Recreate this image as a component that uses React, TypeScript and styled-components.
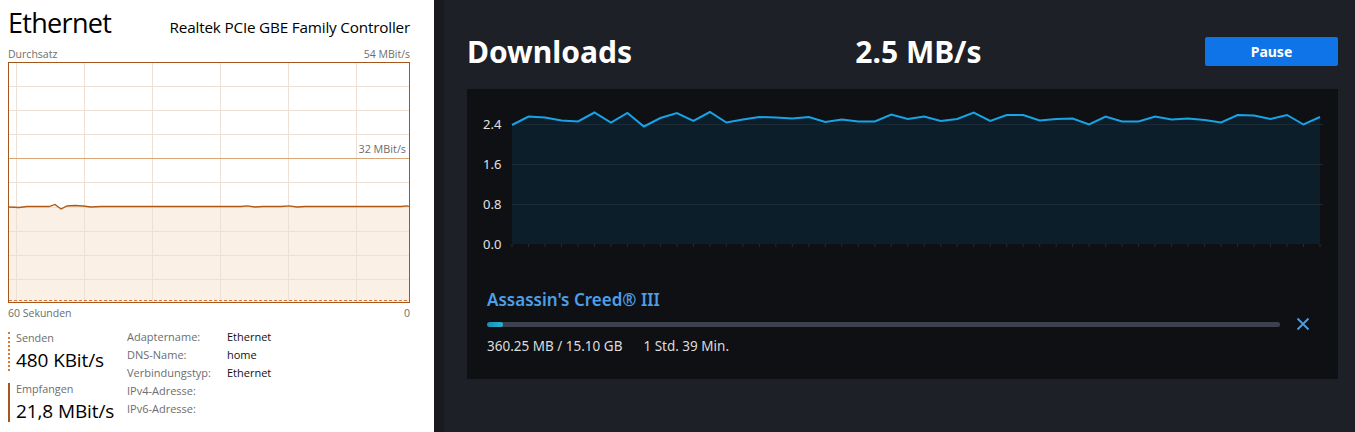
import React from "react";
import styled, { createGlobalStyle } from "styled-components";

const GlobalStyle = createGlobalStyle`
  html, body, #root { margin: 0; padding: 0; height: 100%; }
  body { background: #1d2027; overflow: hidden; }
  * { box-sizing: border-box; }
`;

const Page = styled.div`
  display: flex;
  width: 1355px;
  height: 432px;
`;

/* ---------- Left: Windows Task Manager style ---------- */
const LeftPane = styled.section`
  width: 434px;
  flex: none;
  background: #ffffff;
  padding: 0 24px 0 8px;
  display: flex;
  flex-direction: column;
  font-family: "Open Sans", "Noto Sans", sans-serif;
  color: #000;
`;

const WinHeader = styled.header`
  display: flex;
  justify-content: space-between;
  align-items: baseline;
  height: 44px;
  padding-top: 4px;
`;

const WinTitle = styled.h1`
  margin: 0;
  font-weight: 400;
  font-size: 27px;
  line-height: 38px;
  letter-spacing: -0.7px;
`;

const WinSubtitle = styled.div`
  font-size: 15.3px;
  line-height: 20px;
  letter-spacing: -0.2px;
`;

const CaptionRow = styled.div<{ $top?: number }>`
  display: flex;
  justify-content: space-between;
  font-size: 10.5px;
  line-height: 16px;
  color: #6d6d6d;
  margin-top: ${(p) => p.$top ?? 0}px;
`;

const WinChart = styled.div`
  height: 241px;
  border: 1px solid #a4561c;
`;

const Stats = styled.div`
  display: grid;
  grid-template-columns: 119px 100px 1fr;
  margin-top: 7px;
`;

const StatCol = styled.div`
  display: flex;
  flex-direction: column;
  gap: 12px;
  padding-top: 4px;
`;

const StatBlock = styled.div<{ $dotted?: boolean }>`
  border-left: 2px ${(p) => (p.$dotted ? "dotted #e07434" : "solid #a4561c")};
  padding-left: 6px;
  height: 39px;
`;

const StatLabel = styled.div`
  font-size: 10.8px;
  line-height: 11px;
  color: #6d6d6d;
`;

const StatValue = styled.div`
  font-size: 19px;
  line-height: 22px;
  margin-top: 6px;
  letter-spacing: -0.1px;
`;

const InfoList = styled.div<{ $dark?: boolean }>`
  display: flex;
  flex-direction: column;
  font-size: 11px;
  line-height: 18px;
  color: ${(p) => (p.$dark ? "#111" : "#6d6d6d")};
`;

/* ---------- Right: Downloads panel ---------- */
const RightPane = styled.section`
  flex: 1;
  background: #1d2027;
  border-left: 10px solid #181a20;
  padding: 37px 17px 0 23px;
  font-family: "Noto Sans", "Open Sans", sans-serif;
  color: #fff;
`;

const DlHeader = styled.header`
  display: flex;
  justify-content: space-between;
  align-items: center;
  height: 29px;
`;

const DlTitle = styled.h2`
  margin: 0;
  font-size: 30px;
  font-weight: 700;
  line-height: 29px;
  letter-spacing: 0;
`;

const DlSpeed = styled.div`
  font-size: 30px;
  font-weight: 700;
  line-height: 29px;
  letter-spacing: 0;
`;

const PauseButton = styled.button`
  width: 133px;
  height: 29px;
  border: none;
  border-radius: 2px;
  background: #0e74e8;
  color: #fff;
  font-family: inherit;
  font-size: 14px;
  font-weight: 700;
  cursor: pointer;
`;

const Panel = styled.div`
  margin-top: 23px;
  height: 290px;
  background: #0f1014;
  display: flex;
  flex-direction: column;
`;

const ChartSvg = styled.svg`
  display: block;
  width: 100%;
  height: 180px;
`;

const Item = styled.div`
  padding: 20px 28px 0 20px;
`;

const ItemTitle = styled.div`
  font-size: 17px;
  font-weight: 600;
  line-height: 22px;
  color: #4c9fe6;
`;

const ProgressRow = styled.div`
  display: flex;
  align-items: center;
  gap: 16px;
  margin-top: 6px;
  height: 14px;
`;

const Track = styled.div`
  flex: 1;
  height: 5px;
  border-radius: 3px;
  background: #3b424d;
  overflow: hidden;
`;

const Fill = styled.div`
  height: 100%;
  border-radius: 3px;
  background: linear-gradient(90deg, #1a8fb6, #26b4d2);
`;

const CloseButton = styled.button`
  width: 14px;
  height: 14px;
  padding: 0;
  border: none;
  background: none;
  display: flex;
  cursor: pointer;
`;

const ItemMeta = styled.div`
  display: flex;
  gap: 21px;
  margin-top: 7px;
  font-size: 13.5px;
  line-height: 16px;
  color: #dcdcdc;
`;

const data = [
  2.38, 2.55, 2.53, 2.47, 2.45, 2.63, 2.43, 2.62, 2.35, 2.52, 2.62, 2.46, 2.64,
  2.43, 2.49, 2.54, 2.53, 2.51, 2.54, 2.44, 2.49, 2.45, 2.45, 2.59, 2.5, 2.55,
  2.46, 2.5, 2.63, 2.46, 2.58, 2.58, 2.47, 2.5, 2.51, 2.39, 2.55, 2.45, 2.45,
  2.55, 2.49, 2.51, 2.48, 2.43, 2.58, 2.57, 2.5, 2.58, 2.39, 2.54,
];

const X0 = 45;
const X1 = 853;
const Y0 = 155;
const SCALE = 50;

function DownloadChart() {
  const step = (X1 - X0) / (data.length - 1);
  const pts = data.map((v, i) => [X0 + i * step, Y0 - v * SCALE] as const);
  const line = pts.map(([x, y]) => `${x.toFixed(1)},${y.toFixed(1)}`).join(" ");
  const area = `M${X0},${Y0} L${line.split(" ").join(" L")} L${X1},${Y0} Z`;
  const labels = [2.4, 1.6, 0.8, 0.0];
  return (
    <ChartSvg viewBox="0 0 871 180">
      <path d={area} fill="#0d1e2b" />
      {[2.4, 1.6, 0.8].map((v) => (
        <line key={v} x1={X0} x2={856} y1={Y0 - v * SCALE + 0.5} y2={Y0 - v * SCALE + 0.5} stroke="#1c2a36" strokeWidth={1} />
      ))}
      {pts.map(([x], i) => (
        <line key={i} x1={x} x2={x} y1={Y0} y2={Y0 + 3} stroke="#262a31" strokeWidth={1} />
      ))}
      <polyline points={line} fill="none" stroke="#18a3e6" strokeWidth={2} strokeLinejoin="miter" />
      {labels.map((v) => (
        <text key={v} x={16} y={Y0 - v * SCALE + 5} fill="#e2e2e2" fontSize={13} fontFamily="Noto Sans, sans-serif">
          {v.toFixed(1)}
        </text>
      ))}
    </ChartSvg>
  );
}

function EthernetChart() {
  const vLines = [7, 75, 143, 211, 279, 347];
  const hLines = [23, 47, 71, 95, 119, 144, 168, 192, 216];
  const recv =
    "M0,144 L10,144.5 L18,143.5 L40,143.5 L46,141.5 L52,146 L58,143 L66,142.5 L74,143 L82,144 L92,143.5 L232,143.5 L238,142.8 L246,144 L254,143.5 L272,143.5 L280,142.8 L288,144 L296,143.5 L392,143.5 L398,142.8 L400,143.5";
  return (
    <svg width="400" height="239" viewBox="0 0 400 239" style={{ display: "block" }}>
      <path d={`${recv} L400,239 L0,239 Z`} fill="#fbf0e6" />
      {vLines.map((x) => (
        <line key={x} x1={x + 0.5} x2={x + 0.5} y1={0} y2={239} stroke="#eee0d4" strokeWidth={1} />
      ))}
      {hLines.map((y) => (
        <line key={y} x1={0} x2={400} y1={y + 0.5} y2={y + 0.5} stroke="#eee0d4" strokeWidth={1} />
      ))}
      <line x1={0} x2={400} y1={95.5} y2={95.5} stroke="#d9a678" strokeWidth={1.2} />
      <text x={397} y={90} textAnchor="end" fill="#6d6d6d" fontSize={10.8} fontFamily="Open Sans, sans-serif">
        32 MBit/s
      </text>
      <path d={recv} fill="none" stroke="#b05a16" strokeWidth={1.3} />
      <path d="M0,237.5 L400,237.5" fill="none" stroke="#e07434" strokeWidth={1} strokeDasharray="3 2" />
    </svg>
  );
}

export default function App() {
  return (
    <>
      <GlobalStyle />
      <Page>
        <LeftPane>
          <WinHeader>
            <WinTitle>Ethernet</WinTitle>
            <WinSubtitle>Realtek PCIe GBE Family Controller</WinSubtitle>
          </WinHeader>
          <CaptionRow $top={2}>
            <span>Durchsatz</span>
            <span>54 MBit/s</span>
          </CaptionRow>
          <WinChart>
            <EthernetChart />
          </WinChart>
          <CaptionRow $top={2}>
            <span>60 Sekunden</span>
            <span>0</span>
          </CaptionRow>
          <Stats>
            <StatCol>
              <StatBlock $dotted>
                <StatLabel>Senden</StatLabel>
                <StatValue>480 KBit/s</StatValue>
              </StatBlock>
              <StatBlock>
                <StatLabel>Empfangen</StatLabel>
                <StatValue>21,8 MBit/s</StatValue>
              </StatBlock>
            </StatCol>
            <InfoList>
              <span>Adaptername:</span>
              <span>DNS-Name:</span>
              <span>Verbindungstyp:</span>
              <span>IPv4-Adresse:</span>
              <span>IPv6-Adresse:</span>
            </InfoList>
            <InfoList $dark>
              <span>Ethernet</span>
              <span>home</span>
              <span>Ethernet</span>
            </InfoList>
          </Stats>
        </LeftPane>
        <RightPane>
          <DlHeader>
            <DlTitle>Downloads</DlTitle>
            <DlSpeed>2.5 MB/s</DlSpeed>
            <PauseButton>Pause</PauseButton>
          </DlHeader>
          <Panel>
            <DownloadChart />
            <Item>
              <ItemTitle>Assassin's Creed® III</ItemTitle>
              <ProgressRow>
                <Track>
                  <Fill style={{ width: `${(360.25 / 15100) * 100 * 0.85}%` }} />
                </Track>
                <CloseButton aria-label="Abbrechen">
                  <svg width="14" height="14" viewBox="0 0 14 14">
                    <path d="M1.5 1.5 L12.5 12.5 M12.5 1.5 L1.5 12.5" stroke="#4c9fe6" strokeWidth="1.8" fill="none" />
                  </svg>
                </CloseButton>
              </ProgressRow>
              <ItemMeta>
                <span>360.25 MB / 15.10 GB</span>
                <span>1 Std. 39 Min.</span>
              </ItemMeta>
            </Item>
          </Panel>
        </RightPane>
      </Page>
    </>
  );
}
